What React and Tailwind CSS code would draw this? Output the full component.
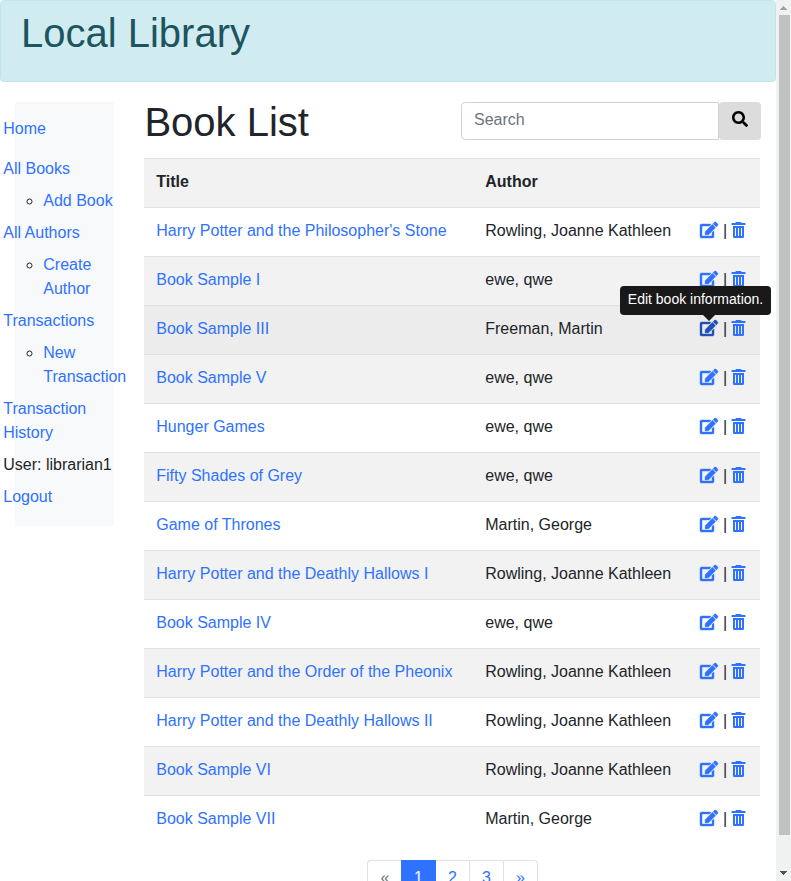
import { FaEdit, FaSearch } from "react-icons/fa";

const books = [
  ["Harry Potter and the Philosopher's Stone", "Rowling, Joanne Kathleen"],
  ["Book Sample I", "ewe, qwe"],
  ["Book Sample III", "Freeman, Martin"],
  ["Book Sample V", "ewe, qwe"],
  ["Hunger Games", "ewe, qwe"],
  ["Fifty Shades of Grey", "ewe, qwe"],
  ["Game of Thrones", "Martin, George"],
  ["Harry Potter and the Deathly Hallows I", "Rowling, Joanne Kathleen"],
  ["Book Sample IV", "ewe, qwe"],
  ["Harry Potter and the Order of the Pheonix", "Rowling, Joanne Kathleen"],
  ["Harry Potter and the Deathly Hallows II", "Rowling, Joanne Kathleen"],
  ["Book Sample VI", "Rowling, Joanne Kathleen"],
  ["Book Sample VII", "Martin, George"],
];

const shade = [false, true, true, true, false, true, false, true, false, true, false, true, false];

function Link({ children }) {
  return <a href="#" className="text-[#2f72ff]">{children}</a>;
}

function SubItem({ children }) {
  return (
    <ul className="list-[circle] pl-10">
      <li className="marker:text-[#212529]"><Link>{children}</Link></li>
    </ul>
  );
}

function Sidebar() {
  return (
    <nav className="ml-[15px] h-[424px] w-[99px] shrink-0 bg-[#f8f9fb] pt-[15px]">
      <div className="-ml-[11.75px] flex w-[111px] flex-col gap-2">
        <div className="mb-2"><Link>Home</Link></div>
        <div><Link>All Books</Link></div>
        <SubItem>Add Book</SubItem>
        <div><Link>All Authors</Link></div>
        <SubItem>Create Author</SubItem>
        <div><Link>Transactions</Link></div>
        <SubItem>New Transaction</SubItem>
        <div><Link>Transaction History</Link></div>
        <div className="whitespace-nowrap">User: librarian1</div>
        <div><Link>Logout</Link></div>
      </div>
    </nav>
  );
}

function Tooltip() {
  return (
    <div className="absolute bottom-full left-1/2 -mb-px w-[151px] -translate-x-[89px]">
      <div className="h-[29px] rounded bg-[#191919] text-center text-sm leading-[27px] whitespace-nowrap text-white">
        Edit book information.
      </div>
      <div className="ml-[83px] h-0 w-0 border-x-[6px] border-t-[6px] border-x-transparent border-t-[#191919]" />
    </div>
  );
}

function TrashIcon() {
  return (
    <svg viewBox="0 0 14 16" className="mt-[3px] h-4 w-[14px] overflow-visible" fill="currentColor">
      <path d="M4 0h5l.7 1h3.400q.4 0 .4.4V3h-14V1.400q0-.4.4-.4H3.300z" />
      <path
        fillRule="evenodd"
        d="M1 4h11v10.700q0 1.300-1.300 1.300h-8.400Q1 16 1 14.700zM3 6v8h1v-8zM6 6v8h1v-8zM9 6v8h1v-8z"
      />
    </svg>
  );
}

function BookRow({ title, author, shaded, active }) {
  const bg = active ? "bg-[#ececec]" : shaded ? "bg-[#f2f2f2]" : "bg-white";
  return (
    <div className={`grid h-[49px] grid-cols-[329px_215px_72px] border-t border-[#dee2e6] pt-[11px] ${bg}`}>
      <div className="pl-[12.25px]"><Link>{title}</Link></div>
      <div className="pl-[12.25px]">{author}</div>
      <div className="flex pl-3 text-[#2f72ff]">
        <span className="relative mt-[3px] h-4 w-[18px]">
          <FaEdit
            strokeWidth={14}
            className={active ? "h-4 w-[18px] overflow-visible text-[#2050b8]" : "h-4 w-[18px] overflow-visible"}
          />
          {active && <Tooltip />}
        </span>
        <span className="w-[14px] text-center text-[#212529]">|</span>
        <TrashIcon />
      </div>
    </div>
  );
}

function Scrollbar() {
  return (
    <div className="flex w-[15px] shrink-0 flex-col items-center bg-[#f0f1f1]">
      <svg width="15" height="15" className="shrink-0" shapeRendering="crispEdges">
        <path d="M4 10h7L7.5 6z" fill="#a2a3a3" />
      </svg>
      <div className="ml-px h-[820px] w-[11px] shrink-0 bg-[#c0c2c2]" />
      <svg width="15" height="15" className="mt-[31px] shrink-0" shapeRendering="crispEdges">
        <path d="M4 5h7L7.5 9z" fill="#505151" />
      </svg>
    </div>
  );
}

export default function App() {
  return (
    <div className="flex h-[881px] w-[791px] overflow-hidden bg-white font-['Liberation_Sans',Arial,sans-serif] text-base leading-6 text-[#212529]">
      <div className="w-[776px] shrink-0">
        <header className="h-[82px] rounded border border-[#bee5eb] bg-[#d1ecf1] px-5 pt-3 text-[#1c545f]">
          <h1 className="text-[40px] leading-10">Local Library</h1>
        </header>
        <div className="mt-5 flex">
          <Sidebar />
          <main className="ml-[30px] w-[617px] shrink-0">
            <div className="flex h-14 items-start justify-between">
              <h2 className="pl-[0.4px] text-[40px] leading-10">Book List</h2>
              <div className="flex h-[38px] w-[300px]">
                <input
                  placeholder="Search"
                  className="h-[38px] w-[258px] rounded-l border border-[#ced4da] bg-white px-3 pb-0.5 placeholder:text-[#6c757d]"
                />
                <button className="flex w-[42px] justify-center rounded bg-[#dcdcdc] pt-[9px] text-black">
                  <FaSearch className="h-4 w-4" />
                </button>
              </div>
            </div>
            <div className="w-[616px]">
              <div className="grid h-[49px] grid-cols-[329px_215px_72px] border-t border-[#dee2e6] bg-[#f2f2f2] pt-[11px] font-bold">
                <div className="pl-[12.25px]">Title</div>
                <div className="pl-[12.25px]">Author</div>
                <div />
              </div>
              {books.map(([title, author], i) => (
                <BookRow key={title} title={title} author={author} shaded={shade[i]} active={i === 2} />
              ))}
            </div>
            <div className="mt-4 ml-[223px] flex h-[38px] w-[171px] text-center leading-[34px] text-[#2f72ff]">
              <span className="w-[34px] rounded-l border border-r-0 border-[#dee2e6] pl-px text-[#6c757d]">«</span>
              <span className="w-[35px] border border-[#2f72ff] bg-[#2f72ff] text-white">1</span>
              <span className="w-[34px] border border-l-0 border-[#dee2e6]">2</span>
              <span className="w-[34px] border border-l-0 border-[#dee2e6]">3</span>
              <span className="w-[34px] rounded-r border border-l-0 border-[#dee2e6]">»</span>
            </div>
          </main>
        </div>
      </div>
      <Scrollbar />
    </div>
  );
}
